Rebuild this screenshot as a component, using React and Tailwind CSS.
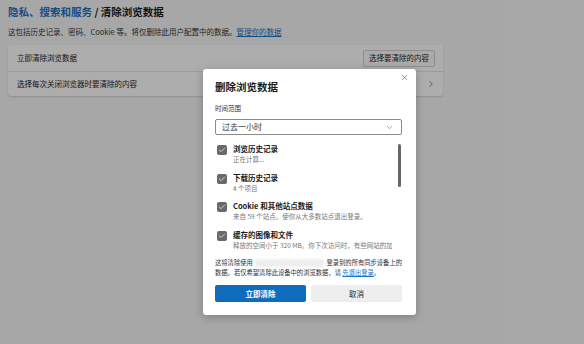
import { X, ChevronDown, ChevronRight, Check } from 'lucide-react';

const font = { fontFamily: '"Noto Sans CJK SC", "Noto Sans", sans-serif' };

const items = [
  ['浏览历史记录', '正在计算...'],
  ['下载历史记录', '4 个项目'],
  ['Cookie 和其他站点数据', '来自 59 个站点。使你从大多数站点退出登录。'],
  ['缓存的图像和文件', '释放的空间小于 320 MB。你下次访问时，有些网站的加载速度可能会变慢。'],
];

export default function App() {
  return (
    <div className="relative w-[584px] h-[344px] overflow-hidden bg-[#f7f7f7] text-[#1b1b1b]" style={font}>
      {/* settings page behind the dialog */}
      <div className="px-[8px] pt-[4px]">
        <h1 className="text-[10.5px] leading-[16px] font-bold whitespace-nowrap">
          <span className="text-[#1a73c8]">隐私、搜索和服务</span> / 清除浏览数据
        </h1>
        <p className="mt-[7px] text-[7.5px] leading-[10px] whitespace-nowrap text-[#333]">
          这包括历史记录、密码、Cookie 等。将仅删除此用户配置中的数据。
          <span className="text-[#1a73c8] underline">管理你的数据</span>
        </p>
        <div className="mt-[8px] w-[435px] bg-white rounded-[3px] shadow-[0_1px_2px_rgba(0,0,0,0.15)]">
          <div className="h-[27px] flex items-center justify-between pl-[9px] pr-[8px] border-b border-[#e5e5e5]">
            <span className="text-[7.5px]">立即清除浏览数据</span>
            <button className="h-[17px] px-[5px] text-[7.5px] border border-[#d1d1d1] rounded-[2px] bg-[#fbfbfb]">选择要清除的内容</button>
          </div>
          <div className="h-[24px] flex items-center justify-between pl-[9px] pr-[7px]">
            <span className="text-[7.5px]">选择每次关闭浏览器时要清除的内容</span>
            <ChevronRight size={10} strokeWidth={1.5} className="text-[#444]" />
          </div>
        </div>
      </div>

      {/* dim overlay */}
      <div className="absolute inset-0 bg-black/[0.32]" />

      {/* dialog */}
      <div className="absolute left-[203px] top-[69px] w-[213px] h-[246px] bg-white rounded-[3px] shadow-[0_2px_8px_rgba(0,0,0,0.25)] pl-[12px] pr-[14px] pt-[10px]">
        <X size={9} strokeWidth={1.4} className="absolute left-[197px] top-[4px] text-[#444]" />
        <h2 className="text-[10.5px] leading-[15px] font-bold whitespace-nowrap">删除浏览数据</h2>
        <div className="mt-[9px] text-[6.5px] leading-[10px] text-[#333]">时间范围</div>
        <div className="mt-[6px] h-[16px] border border-[#8a8a8a] rounded-[2px] flex items-center justify-between pl-[6px] pr-[7px]">
          <span className="text-[8px] text-[#333]">过去一小时</span>
          <ChevronDown size={9} strokeWidth={1.4} className="text-[#555]" />
        </div>
        <div className="relative mt-[5px] h-[114px]">
          <div className="h-full w-[177px] overflow-hidden">
            {items.map(([title, sub]) => (
              <div key={title} className="h-[28.5px] flex pt-[5px] pl-[2px]">
                <div className="w-[10px] h-[10px] rounded-[2px] bg-[#6a6a6a] flex items-center justify-center shrink-0">
                  <Check size={8} strokeWidth={2} className="text-white" />
                </div>
                <div className="ml-[6px] -mt-[1px] whitespace-nowrap">
                  <div className="text-[7.5px] leading-[10px] font-bold">{title}</div>
                  <div className="text-[6.5px] leading-[10px] text-[#777]">{sub}</div>
                </div>
              </div>
            ))}
          </div>
          <div className="absolute left-[183px] top-[4px] w-[3px] h-[43px] rounded-full bg-[#666]" />
        </div>
        <div className="mt-[4px] text-[6.3px] leading-[10px] text-[#333] whitespace-nowrap">
          <div className="flex items-center">
            这将清除使用
            <span className="mx-[2px] w-[70px] h-[8px] bg-[#eeeeee] rounded-[2px] blur-[1px]" />
            登录到的所有同步设备上的
          </div>
          <div>
            数据。若仅希望清除此设备中的浏览数据，请 <span className="text-[#1a73c8] underline">先退出登录</span>。
          </div>
        </div>
        <div className="mt-[7px] flex gap-[5px]">
          <button className="w-[91px] h-[17px] rounded-[2px] bg-[#0f6cbd] text-white text-[7.5px] font-bold">立即清除</button>
          <button className="w-[91px] h-[17px] rounded-[2px] bg-[#eeeeee] text-[#1b1b1b] text-[7.5px]">取消</button>
        </div>
      </div>
    </div>
  );
}
